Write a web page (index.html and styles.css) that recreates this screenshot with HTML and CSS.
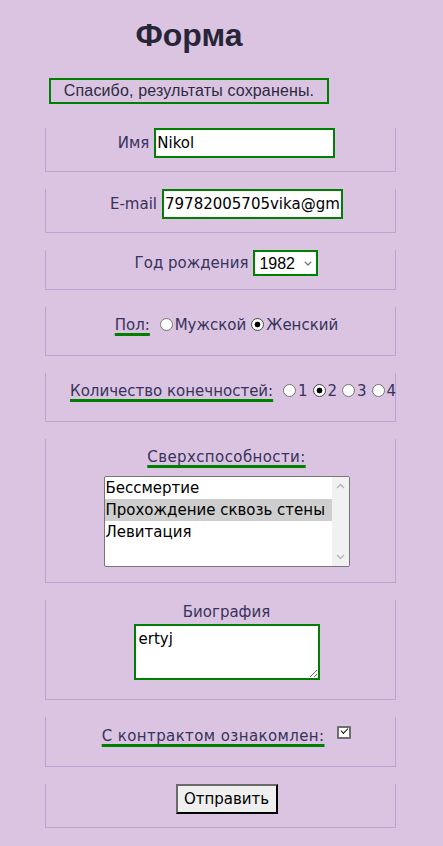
FILE: index.html
```html
<!DOCTYPE html>
<html lang="ru">
<head>
<meta charset="utf-8">
<title>Форма</title>
<link rel="stylesheet" href="styles.css">
</head>
<body>
<div class="header">
  <h1 class="title">Форма</h1>
  <div class="notice">Спасибо, результаты сохранены.</div>
</div>
<form class="form">
  <fieldset class="group">
    <div class="row-inline">
      <label class="field-label" for="name">Имя</label>
      <input class="text-input" id="name" type="text" value="Nikol">
    </div>
  </fieldset>
  <fieldset class="group">
    <div class="row-inline">
      <label class="field-label" for="email">E-mail</label>
      <input class="text-input" id="email" type="text" value="79782005705vika@gmail.com">
    </div>
  </fieldset>
  <fieldset class="group">
    <div class="row-inline row-select">
      <label class="field-label" for="year">Год рождения</label>
      <span class="select-wrap">
        <select class="select" id="year"><option>1982</option></select>
        <svg class="chevron" width="8" height="5" viewBox="0 0 8 5"><path d="M0.8 0.8 L4 4 L7.2 0.8" fill="none" stroke="#777" stroke-width="1.3"/></svg>
      </span>
    </div>
  </fieldset>
  <fieldset class="group">
    <div class="row-text"><span class="legend">Пол:</span> <label class="opt"><input class="radio" type="radio" name="sex">Мужской</label><label class="opt"><input class="radio" type="radio" name="sex" checked>Женский</label></div>
  </fieldset>
  <fieldset class="group">
    <div class="row-text"><span class="legend">Количество конечностей:</span> <label class="opt"><input class="radio" type="radio" name="limbs">1</label><label class="opt"><input class="radio" type="radio" name="limbs" checked>2</label><label class="opt"><input class="radio" type="radio" name="limbs">3</label><label class="opt"><input class="radio" type="radio" name="limbs">4</label></div>
  </fieldset>
  <fieldset class="group">
    <div class="row-text row-tight"><span class="legend legend-wide">Сверхспособности:</span></div>
    <div class="listbox" role="listbox" aria-multiselectable="true">
      <ul class="options">
        <li class="option" role="option">Бессмертие</li>
        <li class="option option-selected" role="option" aria-selected="true">Прохождение сквозь стены</li>
        <li class="option" role="option">Левитация</li>
      </ul>
      <div class="scrollbar">
        <svg width="9" height="6" viewBox="0 0 9 6"><path d="M1 5 L4.5 1.5 L8 5" fill="none" stroke="#b5b5b5" stroke-width="1.4"/></svg>
        <svg width="9" height="6" viewBox="0 0 9 6"><path d="M1 1 L4.5 4.5 L8 1" fill="none" stroke="#b5b5b5" stroke-width="1.4"/></svg>
      </div>
    </div>
  </fieldset>
  <fieldset class="group">
    <div class="block-label">Биография</div>
    <textarea class="textarea">ertyj</textarea>
  </fieldset>
  <fieldset class="group">
    <div class="row-text row-contract"><span class="legend legend-wide">С контрактом ознакомлен:</span> <input class="checkbox" type="checkbox" checked></div>
  </fieldset>
  <fieldset class="group">
    <div class="row-inline"><button class="button" type="button">Отправить</button></div>
  </fieldset>
</form>
</body>
</html>
```
FILE: styles.css
```css
body {
  margin: 8px;
  background: #dbc4e2;
  font-family: "DejaVu Sans", sans-serif;
  font-size: 15px;
  color: #37335a;
}

.header {
  width: 362px;
  text-align: center;
}

.title {
  margin: 9px 0 0;
  font: bold 32px/37px "Liberation Sans", Arial, sans-serif;
  color: #262637;
}

.notice {
  display: inline-block;
  margin-top: 24px;
  border: 2px solid #008000;
  padding: 0 13px;
  font: 16px/22px "Liberation Sans", Arial, sans-serif;
  letter-spacing: 0.15px;
  color: #2b2b3d;
}

.form {
  margin-top: 24px;
}

.group {
  box-sizing: border-box;
  width: 351px;
  min-width: 0;
  margin: 0 0 17px 37px;
  border: 1px solid #bda2d4;
  border-top: none;
  padding: 0 12px 13px 24px;
  text-align: center;
}

.row-inline {
  display: flex;
  justify-content: center;
  align-items: center;
  gap: 5px;
  min-height: 30px;
}

.row-select {
  min-height: 26px;
}

.field-label {
  white-space: nowrap;
}

.text-input {
  box-sizing: border-box;
  width: 181px;
  height: 30px;
  margin: 0;
  border: 2px solid #008000;
  padding: 0 1px;
  background: #fff;
  font: 15px "DejaVu Sans", sans-serif;
  color: #000;
  outline: none;
}

.select-wrap {
  position: relative;
  display: inline-block;
}

.select {
  appearance: none;
  box-sizing: border-box;
  width: 65px;
  height: 26px;
  margin: 0;
  border: 2px solid #008000;
  border-radius: 0;
  padding: 0 0 0 4px;
  background: #fff;
  font: 16px "Liberation Sans", Arial, sans-serif;
  color: #000;
  display: block;
}

.chevron {
  position: absolute;
  right: 6px;
  top: 11px;
  pointer-events: none;
}

.row-text {
  padding: 6px 0 5px;
  line-height: 24px;
  white-space: nowrap;
}

.row-tight {
  padding-bottom: 7px;
}

.row-contract {
  padding-top: 7px;
}

.legend {
  text-decoration: underline #008000 3px;
  text-underline-offset: 3px;
}

.legend-wide {
  letter-spacing: 0.4px;
}

.opt {
  white-space: nowrap;
}

.radio {
  appearance: none;
  box-sizing: border-box;
  width: 13px;
  height: 13px;
  margin: 0 2px 0 5px;
  border: 1px solid #767676;
  border-radius: 50%;
  background: #fff;
  vertical-align: -1px;
}

.radio:checked {
  border-color: #4a4a4a;
  background: radial-gradient(circle, #000 0 2.6px, #fff 3.2px);
}

.checkbox {
  appearance: none;
  position: relative;
  box-sizing: border-box;
  width: 14px;
  height: 13px;
  margin: 0 0 0 8px;
  border: 2px solid #6e6e6e;
  border-radius: 1px;
  background: #fff;
  vertical-align: 2px;
}

.checkbox:checked::after {
  content: "";
  position: absolute;
  left: 2px;
  top: 0px;
  width: 6px;
  height: 3px;
  border-left: 1.6px solid #111;
  border-bottom: 1.6px solid #111;
  transform: rotate(-45deg);
}

.listbox {
  box-sizing: border-box;
  display: flex;
  width: 246px;
  height: 91px;
  margin: 0 auto 2px;
  border: 1px solid #767676;
  border-radius: 2px;
  background: #fff;
  text-align: left;
  color: #000;
}

.options {
  flex: 1;
  margin: 0;
  padding: 0;
  list-style: none;
  font-size: 15px;
}

.option {
  height: 22px;
  line-height: 22px;
  padding-left: 1px;
  white-space: nowrap;
}

.option-selected {
  background: #cecece;
}

.scrollbar {
  display: flex;
  flex-direction: column;
  justify-content: space-between;
  align-items: center;
  width: 17px;
  padding: 6px 0;
  background: #f1f1f1;
  box-sizing: border-box;
}

.block-label {
  line-height: 24px;
}

.textarea {
  box-sizing: border-box;
  display: block;
  width: 186px;
  height: 56px;
  margin: 0 auto 6px;
  border: 2px solid #008000;
  padding: 4px 3px;
  background: #fff;
  font: 15px "DejaVu Sans", sans-serif;
  color: #000;
  outline: none;
}

.button {
  box-sizing: border-box;
  width: 102px;
  height: 30px;
  margin: 0;
  border: 2px solid;
  border-color: #6b6b6b #000 #000 #6b6b6b;
  padding: 0;
  background: #efefef;
  font: 15px "DejaVu Sans", sans-serif;
  color: #000;
}
```
